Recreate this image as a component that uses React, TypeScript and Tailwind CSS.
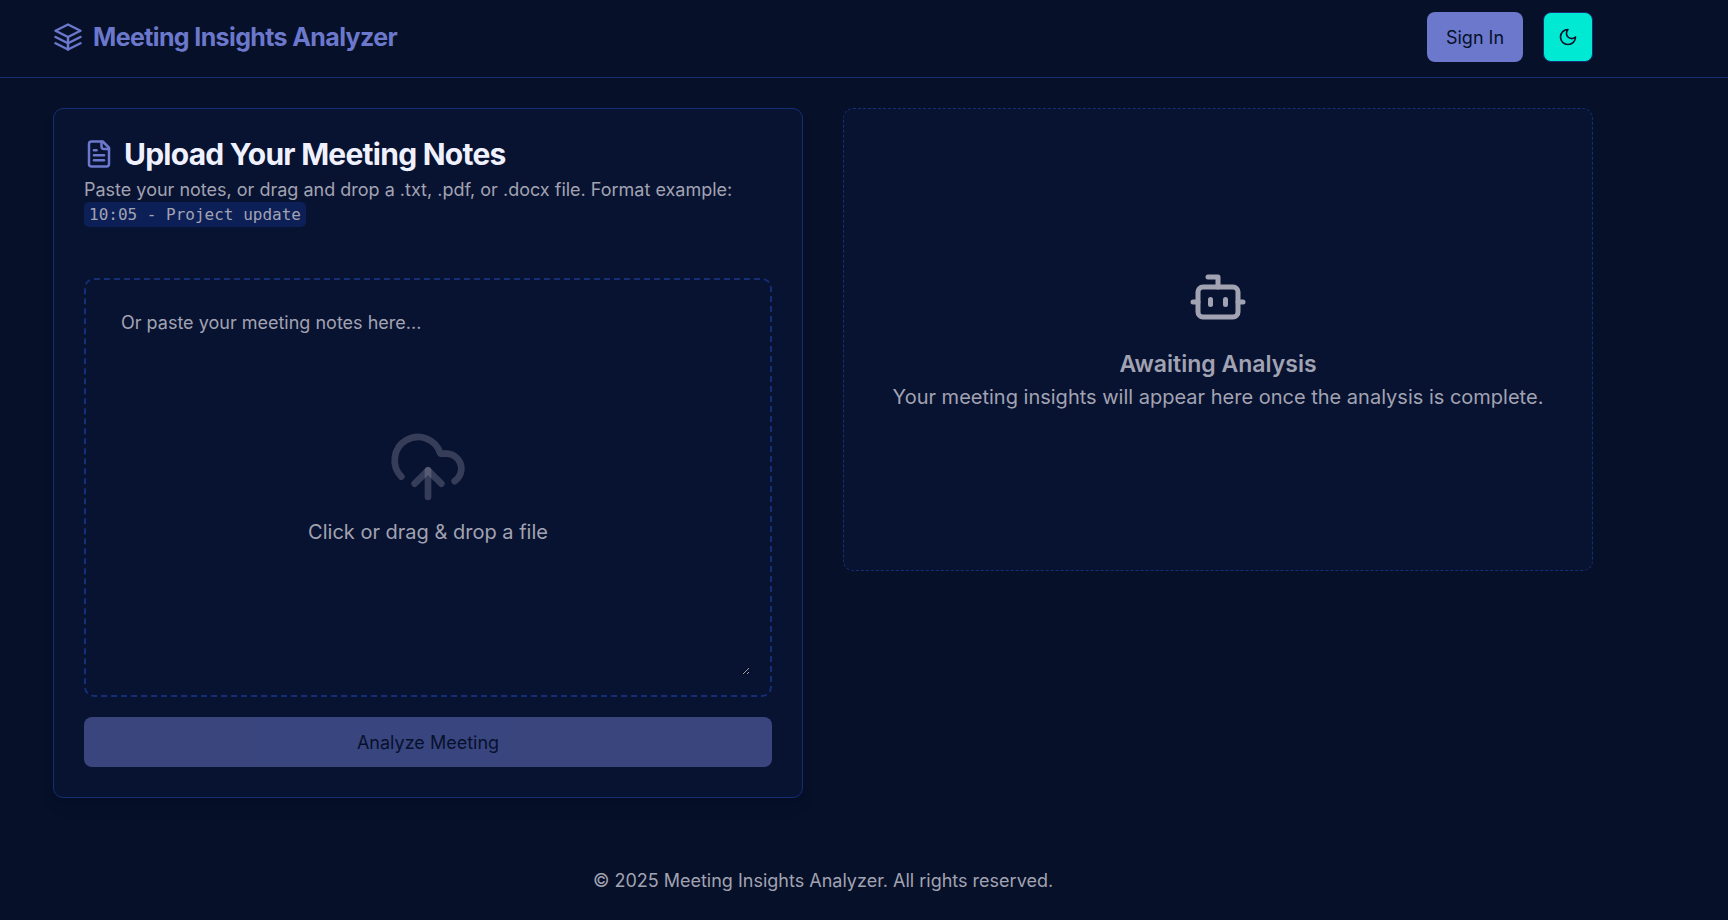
import type { ReactNode } from "react";
import { Bot, CloudUpload } from "lucide-react";

function Icon({
  className,
  children,
}: {
  className: string;
  children: ReactNode;
}) {
  return (
    <svg
      viewBox="0 0 24 24"
      fill="none"
      stroke="currentColor"
      strokeWidth="2"
      strokeLinecap="round"
      strokeLinejoin="round"
      className={className}
      aria-hidden="true"
    >
      {children}
    </svg>
  );
}

function Header() {
  return (
    <header className="border-b border-[#152e75]">
      <div className="flex max-w-[1646px] items-center justify-between px-[53px] pt-3 pb-[15px]">
        <a href="#" className="flex items-center gap-[10px] text-[#6b78cc]">
          <Icon className="size-[30px]">
            <path d="M12 2 2 7l10 5 10-5-10-5z" />
            <path d="m2 17 10 5 10-5" />
            <path d="m2 12 10 5 10-5" />
            <path d="M12 12v10" />
          </Icon>
          <h1 className="text-[25px] leading-[30px] font-bold tracking-tight">
            Meeting Insights Analyzer
          </h1>
        </a>
        <div className="flex items-center gap-5">
          <button
            type="button"
            className="h-[50px] w-24 rounded-lg bg-[#6b78cc] text-[18px] text-[#061029]"
          >
            Sign In
          </button>
          <button
            type="button"
            aria-label="Toggle theme"
            className="flex size-[50px] items-center justify-center rounded-lg border border-[#152e75] bg-[#00ead3] text-[#061029]"
          >
            <Icon className="size-5">
              <path d="M12 3a6 6 0 0 0 9 9 9 9 0 1 1-9-9Z" />
            </Icon>
          </button>
        </div>
      </div>
    </header>
  );
}

function UploadCard() {
  return (
    <section className="rounded-[10px] border border-[#152e75] bg-[#081231] p-[30px] shadow-lg">
      <h2 className="flex items-center gap-[10px] text-[30px] leading-[30px] font-bold tracking-tight text-[#f0f1ff]">
        <Icon className="size-[30px] text-[#6b78cc]">
          <path d="M15 2H6a2 2 0 0 0-2 2v16a2 2 0 0 0 2 2h12a2 2 0 0 0 2-2V7Z" />
          <path d="M14 2v4a2 2 0 0 0 2 2h4" />
          <path d="M10 9H8" />
          <path d="M16 13H8" />
          <path d="M16 17H8" />
        </Icon>
        Upload Your Meeting Notes
      </h2>
      <p className="mt-2 text-[18px] leading-[25px] text-[#a2a3b2]">
        Paste your notes, or drag and drop a .txt, .pdf, or .docx file. Format
        example:
        <br />
        <code className="inline-block rounded-[5px] bg-[#0d1f57] px-[5px] align-top font-['DejaVu_Sans_Mono',monospace] text-[16px]">
          10:05 - Project update
        </code>
      </p>
      <div className="relative mt-[51px] rounded-[10px] border-2 border-dashed border-[#152e75] p-5">
        <textarea
          aria-label="Meeting notes"
          placeholder="Or paste your meeting notes here..."
          className="block h-[375px] w-full resize-y bg-transparent px-[15px] py-[10px] text-[18px] leading-[25px] text-[#f0f1ff] outline-none placeholder:text-[#a2a3b2]"
        />
        <div className="pointer-events-none absolute inset-0 flex flex-col items-center justify-center gap-[10px] pb-0.5 text-[#a2a3b2]">
          <CloudUpload className="size-20 text-[#a2a3b2]/30" />
          <span className="text-[20px] leading-[30px]">
            Click or drag &amp; drop a file
          </span>
        </div>
      </div>
      <button
        type="button"
        disabled
        className="mt-5 h-[50px] w-full rounded-lg bg-[#6b78cc] text-[18px] text-[#061029] opacity-50"
      >
        Analyze Meeting
      </button>
    </section>
  );
}

function ResultCard() {
  return (
    <section className="flex h-[463px] flex-col items-center justify-center rounded-[10px] border border-dashed border-[#152e75] bg-[#081231] text-center text-[#a2a3b2]">
      <Bot className="size-[60px]" />
      <h3 className="mt-5 text-[23px] leading-[35px] font-semibold">
        Awaiting Analysis
      </h3>
      <p className="text-[20px] leading-[30px]">
        Your meeting insights will appear here once the analysis is complete.
      </p>
    </section>
  );
}

export default function App() {
  return (
    <div className="min-h-screen bg-[#061029] font-[Inter,sans-serif]">
      <Header />
      <main className="grid max-w-[1646px] grid-cols-1 items-start gap-10 px-[53px] pt-[30px] lg:grid-cols-2">
        <UploadCard />
        <ResultCard />
      </main>
      <footer className="max-w-[1646px] pt-[70px] pb-[25px] text-center text-[18px] leading-[25px] text-[#a2a3b2]">
        © 2025 Meeting Insights Analyzer. All rights reserved.
      </footer>
    </div>
  );
}
